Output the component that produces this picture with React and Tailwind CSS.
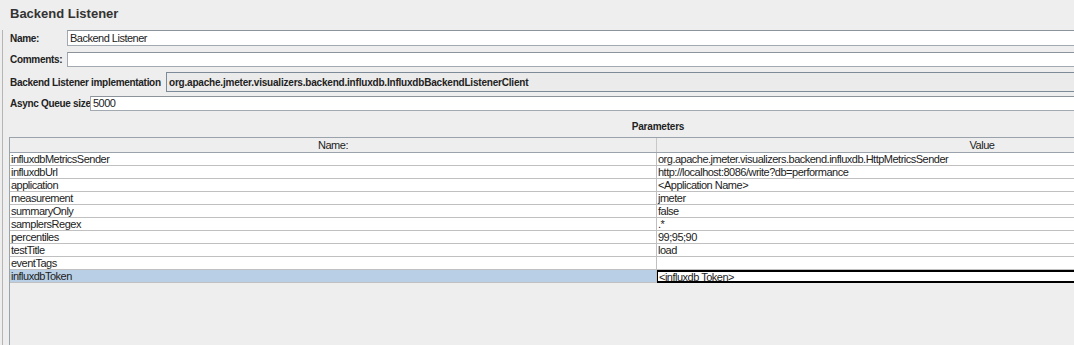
import React from 'react';

const rows = [
    ['influxdbMetricsSender', 'org.apache.jmeter.visualizers.backend.influxdb.HttpMetricsSender'],
    ['influxdbUrl', 'http://localhost:8086/write?db=performance'],
    ['application', '<Application Name>'],
    ['measurement', 'jmeter'],
    ['summaryOnly', 'false'],
    ['samplersRegex', '.*'],
    ['percentiles', '99;95;90'],
    ['testTitle', 'load'],
    ['eventTags', ''],
    ['influxdbToken', '<influxdb Token>'],
];

const Field = ({ value, h = 'h-[15px]' }) => (
    <div className={`flex-1 ${h} bg-white border border-[#a3a9b0] border-t-[#8c939b] flex items-center pl-[2px] text-[11px] tracking-[-0.5px] text-[#222]`}>
        {value}
    </div>
);

export default function App() {
    return (
        <div
            className="w-[1074px] h-[345px] overflow-hidden bg-[#eeeeee] text-[#222]"
            style={{ fontFamily: "'Liberation Sans', Arial, sans-serif" }}
        >
            {/* Title */}
            <div className="h-[30px] pt-[6px] pl-[10px]">
                <h1 className="text-[13px] leading-[16px] font-bold text-[#333]">Backend Listener</h1>
            </div>

            <div className="ml-[2px] border-l border-[#b5b5b5] h-[315px] pl-[7px] flex flex-col w-[1340px]">
                {/* Name */}
                <div className="flex items-center h-[16px]">
                    <span className="w-[57px] text-[10px] tracking-[-0.3px] font-bold">Name:</span>
                    <Field value="Backend Listener" h="h-[16px]" />
                </div>

                {/* Comments */}
                <div className="flex items-center h-[15px] mt-[6px]">
                    <span className="w-[57px] text-[10px] tracking-[-0.3px] font-bold">Comments:</span>
                    <Field value="" />
                </div>

                {/* Implementation */}
                <div className="flex items-center h-[20px] mt-[5px]">
                    <span className="w-[156px] text-[10px] tracking-[-0.3px] font-bold whitespace-nowrap">Backend Listener implementation</span>
                    <div className="flex-1 h-[20px] bg-[#ebebeb] border border-[#7d8b99] flex items-center pl-[2px] text-[10px] tracking-[-0.2px] font-bold">
                        org.apache.jmeter.visualizers.backend.influxdb.InfluxdbBackendListenerClient
                    </div>
                </div>

                {/* Async queue */}
                <div className="flex items-center h-[15px] mt-[4px]">
                    <span className="w-[80px] text-[10px] tracking-[-0.3px] font-bold whitespace-nowrap">Async Queue size</span>
                    <Field value="5000" />
                </div>

                {/* Parameters title */}
                <div className="h-[26px] -ml-[7px] w-[1310px] flex items-center justify-center pt-[4px]">
                    <span className="text-[10px] tracking-[-0.2px] font-bold">Parameters</span>
                </div>

                {/* Table */}
                <div className="-ml-[1px] flex-1 border-l border-[#9aa2ab] flex flex-col">
                    <div className="w-[1297px] border-t border-[#9aa2ab] text-[11px] tracking-[-0.5px]">
                        <div className="flex h-[15px] border-b border-[#9aa2ab]">
                            <div className="w-[647px] border-r border-[#c8c8c8] flex items-center justify-center">Name:</div>
                            <div className="flex-1 flex items-center justify-center">Value</div>
                        </div>
                        {rows.map(([name, value], i) => {
                            const selected = i === rows.length - 1;
                            return (
                                <div key={name} className="flex h-[13px] leading-[12px]">
                                    <div
                                        className={`w-[647px] pl-[1px] border-b border-r border-[#c0c0c0] ${selected ? 'bg-[#b8cfe5]' : 'bg-white'}`}
                                    >
                                        {name}
                                    </div>
                                    {selected ? (
                                        <div className="flex-1 bg-white border border-black border-t-2 border-b-2 pl-[1px] leading-[10px]">
                                            {value}
                                        </div>
                                    ) : (
                                        <div className="flex-1 pl-[1px] bg-white border-b border-[#c0c0c0]">{value}</div>
                                    )}
                                </div>
                            );
                        })}
                    </div>
                </div>
            </div>
        </div>
    );
}
